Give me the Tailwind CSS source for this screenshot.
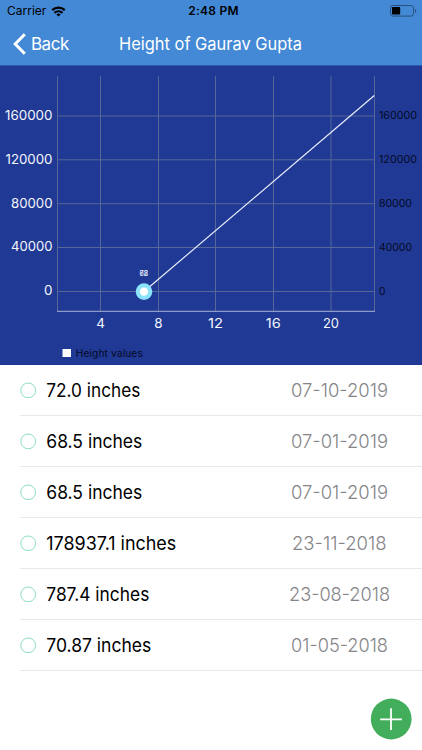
<!DOCTYPE html>
<html lang="en">
<head>
<meta charset="utf-8">
<meta name="viewport" content="width=device-width, initial-scale=1">
<title>Height of Gaurav Gupta</title>
<script src="https://cdn.jsdelivr.net/npm/@tailwindcss/browser@4"></script>
</head>
<body class="bg-white font-[Inter,sans-serif]">
<div class="relative flex h-[750px] w-[422px] flex-col overflow-hidden bg-white">
  <header class="h-[66px] shrink-0 border-b border-[#2a59b0] bg-[#4489d6]">
    <div class="grid h-[22px] grid-cols-3 items-center pl-[7px] pr-[5px] text-black">
      <div class="flex items-center gap-[5px]">
        <span class="text-[12px] leading-[22px] tracking-[0px]">Carrier</span>
        <svg class="h-[11px] w-[15px]" viewBox="0 0 14 11" fill="none" stroke="#000" stroke-width="2.2">
          <path d="M.7 4.1a9 9 0 0 1 12.6 0"/><path d="M3 6.9a5.7 5.7 0 0 1 8 0"/><path d="M7 10.6 4.9 8.5a3 3 0 0 1 4.2 0Z" fill="#000" stroke="none"/>
        </svg>
      </div>
      <span class="whitespace-nowrap pl-[3px] text-center text-[12px] leading-[22px] font-semibold tracking-[0.25px]">2:48 PM</span>
      <svg class="h-[12px] w-[27px] justify-self-end" viewBox="0 0 27 12">
        <rect x=".5" y=".5" width="23" height="10.6" rx="2.4" fill="none" stroke="#28517f"/>
        <rect x="2" y="2" width="8.2" height="7.6" rx=".8" fill="#000"/>
        <path d="M25 4v3.8q1.3-.6 1.3-1.9T25 4Z" fill="#28517f"/>
      </svg>
    </div>
    <div class="grid h-[43px] grid-cols-[119px_184px_119px] items-center text-white">
      <div class="flex items-center gap-[5px] pl-[13px]">
        <svg class="h-[22px] w-[13px]" viewBox="0 0 13 22" fill="none" stroke="#fff" stroke-width="3"><path d="M11.8 1.2 2.2 11l9.6 9.8"/></svg>
        <span class="text-[17px] leading-[20px] tracking-[-0.5px]">Back</span>
      </div>
      <h1 class="whitespace-nowrap text-center text-[17.3px] leading-[22px] font-normal"><svg class="block h-[22px] w-[184px]" viewBox="0 0 184 22"><text x="0" y="16.7" textLength="183" lengthAdjust="spacingAndGlyphs" fill="#fff">Height of Gaurav Gupta</text></svg></h1>
    </div>
  </header>
  <svg class="block h-[299px] w-[422px] shrink-0 bg-[#203994]" viewBox="0 66 422 299">
    <g stroke="#566798" stroke-width="1">
      <path d="M57.5 76V311M100.5 76V311M158.5 76V311M215.5 76V311M273.5 76V311M331 76V311M374.5 76V311"/>
      <path d="M57.5 116H374.5M57.5 159.8H374.5M57.5 203.7H374.5M57.5 247.5H374.5M57.5 291.5H374.5"/>
    </g>
    <path d="M57 311.3H375" stroke="#a9b3d6"/>
    <path d="M144 291.5 374.3 95.5" stroke="#eef2ff" stroke-width="1.15"/>
    <circle cx="144" cy="291.6" r="8.3" fill="#8be4fb"/>
    <circle cx="144" cy="291.6" r="4.2" fill="#fff"/>
    <g fill="#e9eeff" font-size="7" text-anchor="middle">
      <text x="143.8" y="276" textLength="8.5">72</text><text x="143.8" y="276" textLength="8.5">68</text>
    </g>
    <g fill="#f4f6fd" font-size="13.4">
      <text x="5" y="120" textLength="47.5" lengthAdjust="spacingAndGlyphs">160000</text>
      <text x="5.5" y="163.8" textLength="47" lengthAdjust="spacingAndGlyphs">120000</text>
      <text x="11" y="207.6" textLength="41.5" lengthAdjust="spacingAndGlyphs">80000</text>
      <text x="11" y="251.4" textLength="41.5" lengthAdjust="spacingAndGlyphs">40000</text>
      <text x="44" y="295.2">0</text>
    </g>
    <g fill="#050a24" font-size="10.2">
      <text x="379" y="119" textLength="38" lengthAdjust="spacingAndGlyphs">160000</text>
      <text x="379" y="163" textLength="38" lengthAdjust="spacingAndGlyphs">120000</text>
      <text x="379" y="206.8" textLength="33" lengthAdjust="spacingAndGlyphs">80000</text>
      <text x="379" y="250.7" textLength="33" lengthAdjust="spacingAndGlyphs">40000</text>
      <text x="379" y="294.6">0</text>
    </g>
    <g fill="#f4f6fd" font-size="13.4" text-anchor="middle">
      <text x="100.5" y="328.4">4</text><text x="158.3" y="328.4">8</text><text x="215.5" y="328.4" textLength="15" lengthAdjust="spacingAndGlyphs">12</text><text x="273.3" y="328.4" textLength="15" lengthAdjust="spacingAndGlyphs">16</text><text x="331" y="328.4" textLength="16" lengthAdjust="spacingAndGlyphs">20</text>
    </g>
    <rect x="62.5" y="349" width="8.5" height="8" fill="#fff"/>
    <text x="75.8" y="356.8" font-size="10.2" fill="#050a24" textLength="67">Height values</text>
  </svg>
  <ul class="pl-[20px] text-[18.7px] leading-[24px]">
    <li class="flex h-[51px] items-center border-b border-[#e9e9eb]">
      <svg class="mr-[10px] size-4 shrink-0" viewBox="0 0 16 16"><circle cx="8.2" cy="8.4" r="7.4" fill="none" stroke="#8cdcc6"/></svg>
      <svg class="h-6 w-[150px]" viewBox="0 0 150 24"><text x="0.3" y="19" textLength="94" lengthAdjust="spacingAndGlyphs">72.0 inches</text></svg>
      <svg class="ml-auto mr-[28px] h-6 w-[110px]" viewBox="0 0 110 24"><text x="7" y="19" textLength="97" lengthAdjust="spacingAndGlyphs" font-weight="300" fill="#858588">07-10-2019</text></svg>
    </li>
    <li class="flex h-[51px] items-center border-b border-[#e9e9eb]">
      <svg class="mr-[10px] size-4 shrink-0" viewBox="0 0 16 16"><circle cx="8.2" cy="8.4" r="7.4" fill="none" stroke="#8cdcc6"/></svg>
      <svg class="h-6 w-[150px]" viewBox="0 0 150 24"><text x="0.3" y="19" textLength="96" lengthAdjust="spacingAndGlyphs">68.5 inches</text></svg>
      <svg class="ml-auto mr-[28px] h-6 w-[110px]" viewBox="0 0 110 24"><text x="7" y="19" textLength="97" lengthAdjust="spacingAndGlyphs" font-weight="300" fill="#858588">07-01-2019</text></svg>
    </li>
    <li class="flex h-[51px] items-center border-b border-[#e9e9eb]">
      <svg class="mr-[10px] size-4 shrink-0" viewBox="0 0 16 16"><circle cx="8.2" cy="8.4" r="7.4" fill="none" stroke="#8cdcc6"/></svg>
      <svg class="h-6 w-[150px]" viewBox="0 0 150 24"><text x="0.3" y="19" textLength="96" lengthAdjust="spacingAndGlyphs">68.5 inches</text></svg>
      <svg class="ml-auto mr-[28px] h-6 w-[110px]" viewBox="0 0 110 24"><text x="7" y="19" textLength="97" lengthAdjust="spacingAndGlyphs" font-weight="300" fill="#858588">07-01-2019</text></svg>
    </li>
    <li class="flex h-[51px] items-center border-b border-[#e9e9eb]">
      <svg class="mr-[10px] size-4 shrink-0" viewBox="0 0 16 16"><circle cx="8.2" cy="8.4" r="7.4" fill="none" stroke="#8cdcc6"/></svg>
      <svg class="h-6 w-[150px]" viewBox="0 0 150 24"><text x="0.3" y="19" textLength="130" lengthAdjust="spacingAndGlyphs">178937.1 inches</text></svg>
      <svg class="ml-auto mr-[28px] h-6 w-[110px]" viewBox="0 0 110 24"><text x="8" y="19" textLength="94.5" lengthAdjust="spacingAndGlyphs" font-weight="300" fill="#858588">23-11-2018</text></svg>
    </li>
    <li class="flex h-[51px] items-center border-b border-[#e9e9eb]">
      <svg class="mr-[10px] size-4 shrink-0" viewBox="0 0 16 16"><circle cx="8.2" cy="8.4" r="7.4" fill="none" stroke="#8cdcc6"/></svg>
      <svg class="h-6 w-[150px]" viewBox="0 0 150 24"><text x="0.3" y="19" textLength="103" lengthAdjust="spacingAndGlyphs">787.4 inches</text></svg>
      <svg class="ml-auto mr-[28px] h-6 w-[110px]" viewBox="0 0 110 24"><text x="5" y="19" textLength="101" lengthAdjust="spacingAndGlyphs" font-weight="300" fill="#858588">23-08-2018</text></svg>
    </li>
    <li class="flex h-[51px] items-center border-b border-[#e9e9eb]">
      <svg class="mr-[10px] size-4 shrink-0" viewBox="0 0 16 16"><circle cx="8.2" cy="8.4" r="7.4" fill="none" stroke="#8cdcc6"/></svg>
      <svg class="h-6 w-[150px]" viewBox="0 0 150 24"><text x="0.3" y="19" textLength="105" lengthAdjust="spacingAndGlyphs">70.87 inches</text></svg>
      <svg class="ml-auto mr-[28px] h-6 w-[110px]" viewBox="0 0 110 24"><text x="7" y="19" textLength="97" lengthAdjust="spacingAndGlyphs" font-weight="300" fill="#858588">01-05-2018</text></svg>
    </li>
  </ul>
  <button class="absolute right-[10px] bottom-[10px] size-[42px]" aria-label="Add height">
    <svg class="block size-full" viewBox="0 0 42 42"><circle cx="21.2" cy="21" r="20.4" fill="#42ae5b"/><path d="M21 10.3v21.6M10.2 21.3h21.7" stroke="#fff" stroke-width="1.8"/></svg>
  </button>
</div>
</body>
</html>
